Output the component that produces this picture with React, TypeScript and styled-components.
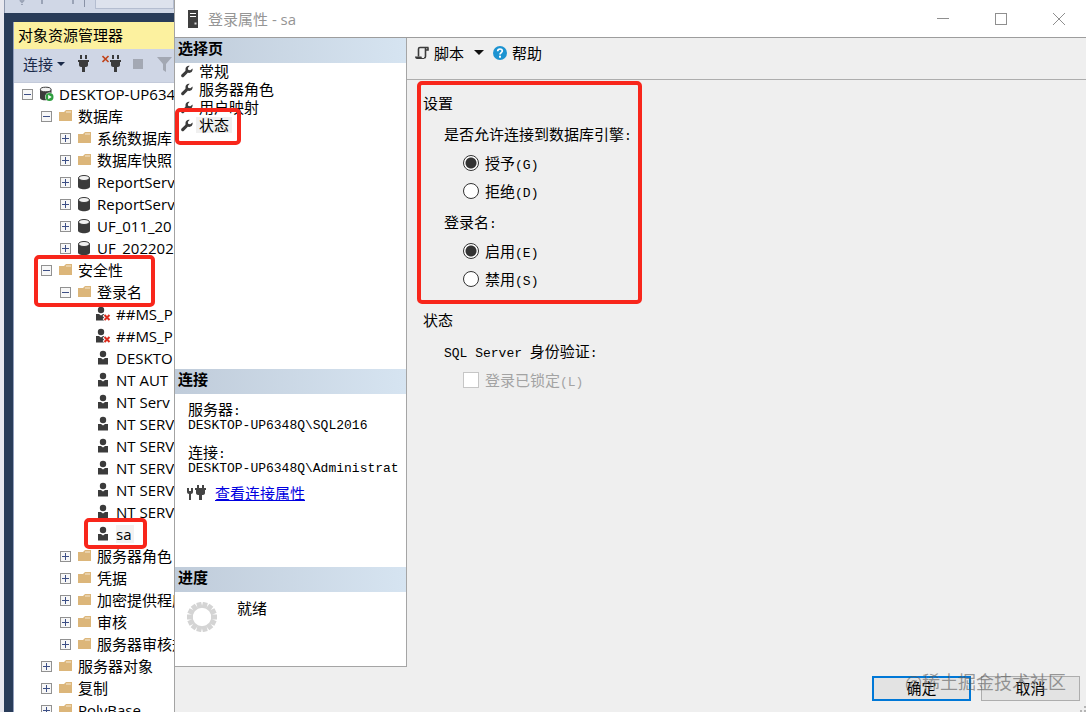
import React from "react";
import styled, { createGlobalStyle, css } from "styled-components";

const uiFont = `"Open Sans", "Noto Sans CJK SC", sans-serif`;
const dialogFont = `"Noto Sans CJK SC", sans-serif`;
const monoFont = `"Liberation Mono", "Noto Sans CJK SC", monospace`;

const GlobalStyle = createGlobalStyle`
  *, *::before, *::after { box-sizing: border-box; }
  body { margin: 0; overflow: hidden; background: #f0f0f0; color: #000; }
  button, input { font: inherit; color: inherit; margin: 0; }
  ul { list-style: none; margin: 0; padding: 0; }
  h1, h2, h3, p { margin: 0; font: inherit; }
  svg { display: block; flex: none; }
`;

/* ---------- shell ---------- */

const Desktop = styled.div`
  display: grid;
  grid-template-columns: 174px minmax(0, 1fr);
  height: 100vh;
  overflow: hidden;
`;

const Highlight = styled.span<{ $top: number; $left: number; $width: number; $height: number }>`
  position: absolute;
  z-index: 2;
  top: ${(p) => p.$top}px;
  left: ${(p) => p.$left}px;
  width: ${(p) => p.$width}px;
  height: ${(p) => p.$height}px;
  border: 4px solid #f8261b;
  border-radius: 5px;
  pointer-events: none;
`;

/* ---------- object explorer ---------- */

const MainWindow = styled.div`
  display: flex;
  flex-direction: column;
  min-width: 0;
  overflow: hidden;
  border-left: 4px solid #e8e8ef;
  background: #293c59;
  font-family: ${uiFont};
`;

const TopStrip = styled.div`
  flex: none;
  display: flex;
  height: 13px;
  padding-left: 14px;
  background: #d0d7e6;
  border-left: 1px solid #8e98ae;
`;

const StripCombo = styled.div`
  flex: 1;
  height: 9px;
  margin-left: 10px;
  border: 1px solid #b4bdd0;
  border-top: 0;
  background: #dde2ed;
`;

const Panel = styled.section`
  flex: 1;
  min-height: 0;
  display: flex;
  flex-direction: column;
  margin: 9px 0 0 9px;
  border-left: 1px solid #93a0bd;
  background: #fff;
`;

const PanelTitle = styled.h2`
  flex: none;
  height: 27px;
  padding-left: 4px;
  font-size: 15px;
  line-height: 26px;
  white-space: nowrap;
  background: #fcf19f;
`;

const PanelTools = styled.div`
  flex: none;
  display: flex;
  align-items: center;
  gap: 12px;
  height: 34px;
  padding: 0 0 3px 9px;
  overflow: hidden;
  background: #cfd6e5;
  border-bottom: 1px solid #c3cada;
`;

const ToolButton = styled.button`
  flex: none;
  display: flex;
  align-items: center;
  gap: 4px;
  padding: 0;
  border: 0;
  background: none;
  color: #1b2a49;
  font-size: 15px;
  line-height: 22px;
`;

const Tree = styled.ul`
  flex: 1;
  min-height: 0;
  overflow: hidden;
`;

const TreeRow = styled.li<{ $level: number }>`
  position: relative;
  display: flex;
  align-items: center;
  height: 22px;
  padding-left: ${(p) => 8 + p.$level * 19}px;
  font-size: 15px;
  line-height: 22px;
  white-space: nowrap;
`;

const Expander = styled.button`
  flex: none;
  display: block;
  width: 11px;
  height: 11px;
  padding: 0;
  border: 0;
  background: none;
`;

const ExpanderSpace = styled.span`
  flex: none;
  width: 11px;
`;

const TreeIcon = styled.span`
  flex: none;
  width: 15px;
  margin: 0 5px 0 6px;
`;

const TreeLabel = styled.span<{ $selected?: boolean }>`
  ${(p) =>
    p.$selected &&
    css`
      background: #f2f2f2;
      padding-right: 3px;
      line-height: 18px;
    `}
`;

/* ---------- dialog ---------- */

const Dialog = styled.main`
  display: flex;
  flex-direction: column;
  min-width: 0;
  border-left: 1px solid #a3a3a3;
  background: #efefef;
  font-family: ${dialogFont};
  font-size: 15px;
`;

const TitleBar = styled.header`
  flex: none;
  display: flex;
  align-items: center;
  height: 38px;
  padding-left: 12px;
  border-bottom: 1px solid #9d9d9d;
  background: #fff;
`;

const Title = styled.h1`
  flex: 1;
  margin-left: 9px;
  color: #959595;
  font-family: ${uiFont};
  font-size: 15px;
  line-height: 22px;
`;

const WindowButtons = styled.div`
  display: flex;
  gap: 4px;
`;

const WindowButton = styled.button`
  display: grid;
  place-items: center;
  width: 54px;
  height: 34px;
  padding: 0;
  border: 0;
  background: none;
`;

const DialogBody = styled.div`
  flex: 1;
  min-height: 0;
  display: grid;
  grid-template-columns: 232px minmax(0, 1fr);
`;

const Side = styled.aside`
  display: flex;
  flex-direction: column;
  margin-bottom: 45px;
  border-right: 1px solid #a5a5a5;
  border-bottom: 1px solid #a5a5a5;
  background: #fff;
`;

const SideSection = styled.section<{ $height?: number }>`
  ${(p) => (p.$height ? `flex: none; height: ${p.$height}px;` : "flex: 1;")}
`;

const SideTitle = styled.h2`
  height: 25px;
  padding-left: 3px;
  background: linear-gradient(90deg, #c0ccda, #d6e4f1);
  font-size: 15px;
  font-weight: 700;
  line-height: 19px;
`;

const PageRow = styled.li`
  position: relative;
  display: flex;
  align-items: center;
  gap: 3px;
  height: 18px;
  padding: 0 0 2px 6px;
`;

const PageLink = styled.button<{ $selected?: boolean }>`
  padding: 0 3px;
  border: 0;
  background: ${(p) => (p.$selected ? "#f0f0f0" : "none")};
  line-height: 16px;
`;

const Mono = styled.span`
  font-family: ${monoFont};
  font-size: 13px;
  line-height: 1;
`;

const ConnectionInfo = styled.dl`
  margin: 0;
  padding: 7px 0 0 13px;
  overflow: hidden;
  white-space: nowrap;

  dt { line-height: 16px; }
  dd {
    margin: 0 0 10px;
    font-family: ${monoFont};
    font-size: 13px;
    line-height: 16px;
  }
  dd:last-of-type { margin-bottom: 7px; }
`;

const LinkRow = styled.div`
  display: flex;
  align-items: center;
  gap: 8px;
  padding-left: 12px;
  line-height: 16px;

  a { color: #0000e0; }
`;

const ProgressRow = styled.div`
  display: flex;
  gap: 20px;
  padding: 10px 0 0 12px;
  line-height: 12px;
`;

const Content = styled.div`
  display: flex;
  flex-direction: column;
  min-width: 0;
`;

const ActionBar = styled.div`
  flex: none;
  display: flex;
  align-items: center;
  height: 42px;
  padding: 0 0 12px 8px;
  border-bottom: 1px solid #adadad;
`;

const ActionButton = styled.button`
  display: flex;
  align-items: center;
  gap: 5px;
  margin-right: 9px;
  padding: 0;
  border: 0;
  background: none;
  line-height: 22px;
`;

const Caret = styled.span`
  margin-left: 5px;
  border: 5px solid transparent;
  border-top-color: #111;
  border-bottom: 0;
`;

const Form = styled.form`
  flex: 1;
  display: flex;
  flex-direction: column;
  padding-left: 16px;
`;

const Group = styled.section`
  position: relative;
  padding-top: 11px;

  & + & { padding-top: 15px; }
`;

const GroupTitle = styled.h2`
  margin-bottom: 2px;
  line-height: 24px;
`;

const Field = styled.fieldset`
  margin: 0;
  padding: 4px 0 0 21px;
  border: 0;
  min-width: 0;
`;

const Legend = styled.legend`
  float: left;
  width: 100%;
  height: 28px;
  padding: 0;
  line-height: 26px;
`;

const Option = styled.label<{ $disabled?: boolean }>`
  clear: both;
  display: flex;
  align-items: center;
  gap: 6px;
  height: 28px;
  padding-left: 19px;
  line-height: 16px;
  color: ${(p) => (p.$disabled ? "#a3a3a3" : "#000")};
`;

const Radio = styled.input`
  appearance: none;
  width: 16px;
  height: 16px;
  border: 1px solid #333;
  border-radius: 50%;
  background: #fff;

  &:checked {
    background: radial-gradient(circle, #333 0 5px, #fff 6px);
  }
`;

const Check = styled.input`
  appearance: none;
  width: 16px;
  height: 16px;
  border: 1px solid #c6c6c6;
  background: #fff;
`;

const Footer = styled.footer`
  position: relative;
  display: flex;
  justify-content: flex-end;
  gap: 10px;
  margin-top: auto;
  padding: 0 6px 11px 0;
`;

const DialogButton = styled.button<{ $primary?: boolean }>`
  width: 99px;
  height: 25px;
  padding: 0 0 2px;
  border: ${(p) => (p.$primary ? "2px solid #0078d7" : "1px solid #adadad")};
  background: #e3e3e3;
  line-height: 18px;
`;

const Watermark = styled.span`
  position: absolute;
  right: 20px;
  top: -7px;
  color: rgba(90, 90, 90, 0.6);
  font-size: 18px;
  line-height: 24px;
  white-space: nowrap;
  pointer-events: none;
`;

const Grip = styled.svg`
  position: absolute;
  right: 0;
  bottom: 0;
`;

/* ---------- icons ---------- */

const FolderIcon = () => (
  <svg width="15" height="14" viewBox="0 0 15 14">
    <path d="M1 3h5l2-2h6v11H1z" fill="#dcb67a" />
    <path d="M8 3h5" stroke="#f6ead6" />
  </svg>
);

const DatabaseIcon = () => (
  <svg width="15" height="16" viewBox="0 0 15 16">
    <path d="M1 4v8.500c0 1.700 2.700 2.700 6 2.700s6-1 6-2.700V4z" fill="#3b3b3b" />
    <ellipse cx="7" cy="4" rx="5.500" ry="2.500" fill="#f2f2f2" stroke="#3b3b3b" />
  </svg>
);

const ServerDbIcon = () => (
  <svg width="15" height="16" viewBox="0 0 15 16">
    <path d="M1 3.500v8.500c0 1.500 2.500 2.300 5.500 2.300s6-.8 6-2.300V3.500z" fill="#3b3b3b" />
    <ellipse cx="6.700" cy="3.500" rx="5.300" ry="2.300" fill="#f2f2f2" stroke="#3b3b3b" />
    <circle cx="10.500" cy="11" r="4.500" fill="#fff" />
    <circle cx="10.500" cy="11" r="4" fill="#2f9e3f" />
    <path d="M9.200 8.800v4.400l3.500-2.200z" fill="#fff" />
  </svg>
);

const UserIcon = ({ disabled = false }: { disabled?: boolean }) => (
  <svg width="15" height="16" viewBox="0 0 15 16">
    <g transform={disabled ? "translate(-2 0)" : undefined}>
      <circle cx="7" cy="4" r="3.200" fill="#3b3b3b" />
      <path d="M2 8h3l2 1.500L9 8h3v6.500H2z" fill="#3b3b3b" />
    </g>
    {disabled && (
      <>
        <path d="M8 8.500l6 6M14 8.500l-6 6" stroke="#fff" strokeWidth="4" />
        <path d="M8.500 9l5 5M13.500 9l-5 5" stroke="#dc2b1c" strokeWidth="2" />
      </>
    )}
  </svg>
);

const ExpanderIcon = ({ open }: { open: boolean }) => (
  <svg width="11" height="11" viewBox="0 0 11 11">
    <rect x=".5" y=".5" width="10" height="10" fill="#f7f7f7" stroke="#919191" />
    <path d={open ? "M2 5.500h7" : "M2 5.500h7M5.500 2v7"} stroke="#3d4f86" />
  </svg>
);

const PlugIcon = ({ crossed = false }: { crossed?: boolean }) => (
  <svg width={crossed ? 19 : 13} height="18" viewBox={crossed ? "-7 0 19 18" : "0 0 13 18"}>
    <path d="M3 0h2v4H3zM8 0h2v4H8zM1 5h11v2h-1v3c0 1-1 2-2 2H8v5H5v-5H4c-1 0-2-1-2-2V7H1z" fill="#3b3b3b" />
    {crossed && <path d="M-6.500 1l6 6M-.5 1l-6 6" stroke="#c0441c" strokeWidth="1.600" />}
  </svg>
);

const ConnectionIcon = () => (
  <svg width="20" height="17" viewBox="0 0 20 17">
    <path d="M0 4h2v3h2V4h2v4c0 1-1 2-2 2v6H2v-6C1 10 0 9 0 8z" fill="#444" />
    <path d="M10 1h2v3h3V1h2v3h2v2h-1v3c0 1-1 2-2 2h-1v5h-3v-5h-1c-1 0-2-1-2-2V6H8V4h2z" fill="#444" />
  </svg>
);

const WrenchIcon = () => (
  <svg width="12" height="13" viewBox="0 0 12 13">
    <path
      d="M8.700.8C6.500.2 4.200 2 4.500 4.500c.1.800 0 1.200-.5 1.700L.6 9.500c-1.500 1.700.7 3.700 2.300 2.200l3.200-3.300c.5-.5 1-.6 1.700-.5 2.500.3 4.300-1.800 3.700-4.300L9.400 5.300 7.300 4.900 6.800 2.900z"
      fill="#3b3b3b"
    />
  </svg>
);

const ServerIcon = () => (
  <svg width="12" height="18" viewBox="0 0 12 18">
    <rect x="1" width="10" height="18" fill="#3f3f3f" />
    <path d="M3 3.500h6M3 6.500h6" stroke="#fff" />
    <path d="M7.500 13.500h2" stroke="#ddd" strokeWidth="2" />
  </svg>
);

const ScriptIcon = () => (
  <svg width="14" height="14" viewBox="0 0 14 14">
    <path d="M3.500 10.500V3c0-1 .6-1.500 1.500-1.500h8.500M13 1.500V4h-2M10.500 2v8.500c0 1-.6 1.500-1.500 1.500" fill="none" stroke="#3b3b3b" strokeWidth="1.600" />
    <path d="M0 10.500h6.500c0 1 .5 1.500 1.500 1.500h1v1H2c-1.200 0-2-1-2-2.500z" fill="#3b3b3b" />
  </svg>
);

const HelpIcon = () => (
  <svg width="14" height="14" viewBox="0 0 14 14">
    <circle cx="7" cy="7" r="7" fill="#1c93d1" />
    <path d="M4.700 5.300C4.700 2.300 9.300 2.300 9.300 5c0 1.500-2.300 1.700-2.300 3.500" fill="none" stroke="#fff" strokeWidth="1.700" />
    <rect x="6" y="9.700" width="2" height="2" fill="#fff" />
  </svg>
);

const SpinnerIcon = () => (
  <svg width="30" height="30" viewBox="-15 -15 30 30">
    {Array.from({ length: 14 }, (_, i) => (
      <rect key={i} x="-2.500" y="-15" width="5" height="6" fill="#d4d4d4" transform={`rotate(${(i * 360) / 14 + 13})`} />
    ))}
  </svg>
);

/* ---------- data ---------- */

type Kind = "server" | "folder" | "database" | "user" | "disabledUser";
type Box = [top: number, left: number, width: number, height: number];

interface Node {
  level: number;
  kind: Kind;
  label: string;
  open?: boolean;
  selected?: boolean;
  box?: Box;
}

const user = (label: string, kind: Kind = "user"): Node => ({ level: 3, kind, label });
const item = (level: number, kind: Kind, label: string, open = false): Node => ({ level, kind, label, open });

const nodes: Node[] = [
  item(0, "server", "DESKTOP-UP634", true),
  item(1, "folder", "数据库", true),
  item(2, "folder", "系统数据库"),
  item(2, "folder", "数据库快照"),
  item(2, "database", "ReportServ"),
  item(2, "database", "ReportServ"),
  item(2, "database", "UF_011_20"),
  item(2, "database", "UF_202202"),
  { ...item(1, "folder", "安全性", true), box: [-4, 20, 121, 52] },
  item(2, "folder", "登录名", true),
  user("##MS_P", "disabledUser"),
  user("##MS_P", "disabledUser"),
  user("DESKTO"),
  user("NT AUT"),
  user("NT Serv"),
  user("NT SERV"),
  user("NT SERV"),
  user("NT SERV"),
  user("NT SERV"),
  user("NT SERV"),
  { ...user("sa"), selected: true, box: [-5, 70, 63, 31] },
  item(2, "folder", "服务器角色"),
  item(2, "folder", "凭据"),
  item(2, "folder", "加密提供程序"),
  item(2, "folder", "审核"),
  item(2, "folder", "服务器审核规范"),
  item(1, "folder", "服务器对象"),
  item(1, "folder", "复制"),
  item(1, "folder", "PolyBase"),
];

const icons: Record<Kind, React.ReactNode> = {
  server: <ServerDbIcon />,
  folder: <FolderIcon />,
  database: <DatabaseIcon />,
  user: <UserIcon />,
  disabledUser: <UserIcon disabled />,
};

const pages = ["常规", "服务器角色", "用户映射", "状态"];

const RadioOption = ({ name, text, hotkey, checked }: { name: string; text: string; hotkey: string; checked?: boolean }) => (
  <Option>
    <Radio type="radio" name={name} defaultChecked={checked} />
    <span>
      {text}
      <Mono>({hotkey})</Mono>
    </span>
  </Option>
);

const ObjectExplorer = () => (
  <MainWindow>
    <TopStrip>
      <svg width="66" height="8" viewBox="0 0 66 8" stroke="#9aa3b6" fill="none">
        <path d="M1 0l2 2 2-2M3 4v1" strokeWidth="2" />
        <path d="M23 0v4M54 0v4" strokeWidth="2" />
        <path d="M65.500 0v7" stroke="#8992a6" />
      </svg>
      <StripCombo />
    </TopStrip>
    <Panel>
      <PanelTitle>对象资源管理器</PanelTitle>
      <PanelTools>
        <ToolButton>
          连接
          <svg width="8" height="4" viewBox="0 0 8 4"><path d="M0 0h8L4 4z" fill="#1b2a49" /></svg>
        </ToolButton>
        <ToolButton aria-label="连接对象资源管理器"><PlugIcon /></ToolButton>
        <ToolButton aria-label="断开连接"><PlugIcon crossed /></ToolButton>
        <ToolButton aria-label="停止">
          <svg width="12" height="11"><rect width="10" height="10" fill="#a3a8b3" /></svg>
        </ToolButton>
        <ToolButton aria-label="筛选器">
          <svg width="15" height="15" viewBox="0 0 15 15"><path d="M0 0h15L9 7v8l-3-2V7z" fill="#a3a8b3" /></svg>
        </ToolButton>
      </PanelTools>
      <Tree>
        {nodes.map((n, i) => (
          <TreeRow key={i} $level={n.level}>
            {n.open === undefined ? (
              <ExpanderSpace />
            ) : (
              <Expander aria-label={n.label} aria-expanded={n.open}>
                <ExpanderIcon open={n.open} />
              </Expander>
            )}
            <TreeIcon>{icons[n.kind]}</TreeIcon>
            <TreeLabel $selected={n.selected}>{n.label}</TreeLabel>
            {n.box && <Highlight $top={n.box[0]} $left={n.box[1]} $width={n.box[2]} $height={n.box[3]} />}
          </TreeRow>
        ))}
      </Tree>
    </Panel>
  </MainWindow>
);

export default function App() {
  return (
    <>
      <GlobalStyle />
      <Desktop>
        <ObjectExplorer />
        <Dialog>
          <TitleBar>
            <ServerIcon />
            <Title>登录属性 - sa</Title>
            <WindowButtons>
              <WindowButton aria-label="最小化">
                <svg width="12" height="12"><path d="M0 5.500h12" stroke="#8f8f8f" /></svg>
              </WindowButton>
              <WindowButton aria-label="最大化">
                <svg width="12" height="12"><rect x=".5" y=".5" width="11" height="11" fill="none" stroke="#8f8f8f" /></svg>
              </WindowButton>
              <WindowButton aria-label="关闭">
                <svg width="12" height="12"><path d="M0 0l12 12M12 0L0 12" stroke="#8f8f8f" /></svg>
              </WindowButton>
            </WindowButtons>
          </TitleBar>
          <DialogBody>
            <Side>
              <SideSection>
                <SideTitle>选择页</SideTitle>
                <ul>
                  {pages.map((page) => (
                    <PageRow key={page}>
                      <WrenchIcon />
                      <PageLink $selected={page === "状态"}>{page}</PageLink>
                      {page === "状态" && <Highlight $top={-9} $left={0} $width={66} $height={37} />}
                    </PageRow>
                  ))}
                </ul>
              </SideSection>
              <SideSection $height={198}>
                <SideTitle>连接</SideTitle>
                <ConnectionInfo>
                  <dt>服务器<Mono>:</Mono></dt>
                  <dd>DESKTOP-UP6348Q\SQL2016</dd>
                  <dt>连接<Mono>:</Mono></dt>
                  <dd>DESKTOP-UP6348Q\Administrat</dd>
                </ConnectionInfo>
                <LinkRow>
                  <ConnectionIcon />
                  <a href="#connection">查看连接属性</a>
                </LinkRow>
              </SideSection>
              <SideSection $height={99}>
                <SideTitle>进度</SideTitle>
                <ProgressRow>
                  <SpinnerIcon />
                  <span>就绪</span>
                </ProgressRow>
              </SideSection>
            </Side>
            <Content>
              <ActionBar>
                <ActionButton>
                  <ScriptIcon />
                  脚本
                  <Caret />
                </ActionButton>
                <ActionButton>
                  <HelpIcon />
                  帮助
                </ActionButton>
              </ActionBar>
              <Form onSubmit={(e) => e.preventDefault()}>
                <Group>
                  <Highlight $top={1} $left={-6} $width={225} $height={223} />
                  <GroupTitle>设置</GroupTitle>
                  <Field>
                    <Legend>是否允许连接到数据库引擎<Mono>:</Mono></Legend>
                    <RadioOption name="connect" text="授予" hotkey="G" checked />
                    <RadioOption name="connect" text="拒绝" hotkey="D" />
                  </Field>
                  <Field>
                    <Legend>登录名<Mono>:</Mono></Legend>
                    <RadioOption name="login" text="启用" hotkey="E" checked />
                    <RadioOption name="login" text="禁用" hotkey="S" />
                  </Field>
                </Group>
                <Group>
                  <GroupTitle>状态</GroupTitle>
                  <Field>
                    <Legend>
                      <Mono>SQL Server </Mono>身份验证<Mono>:</Mono>
                    </Legend>
                    <Option $disabled>
                      <Check type="checkbox" disabled />
                      <span>登录已锁定<Mono>(L)</Mono></span>
                    </Option>
                  </Field>
                </Group>
                <Footer>
                  <DialogButton type="submit" $primary>确定</DialogButton>
                  <DialogButton type="button">取消</DialogButton>
                  <Watermark>@稀土掘金技术社区</Watermark>
                  <Grip width="6" height="6"><path d="M4 0h2v2H4zM0 4h2v2H0zM4 4h2v2H4z" fill="#b5b5b5" /></Grip>
                </Footer>
              </Form>
            </Content>
          </DialogBody>
        </Dialog>
      </Desktop>
    </>
  );
}
